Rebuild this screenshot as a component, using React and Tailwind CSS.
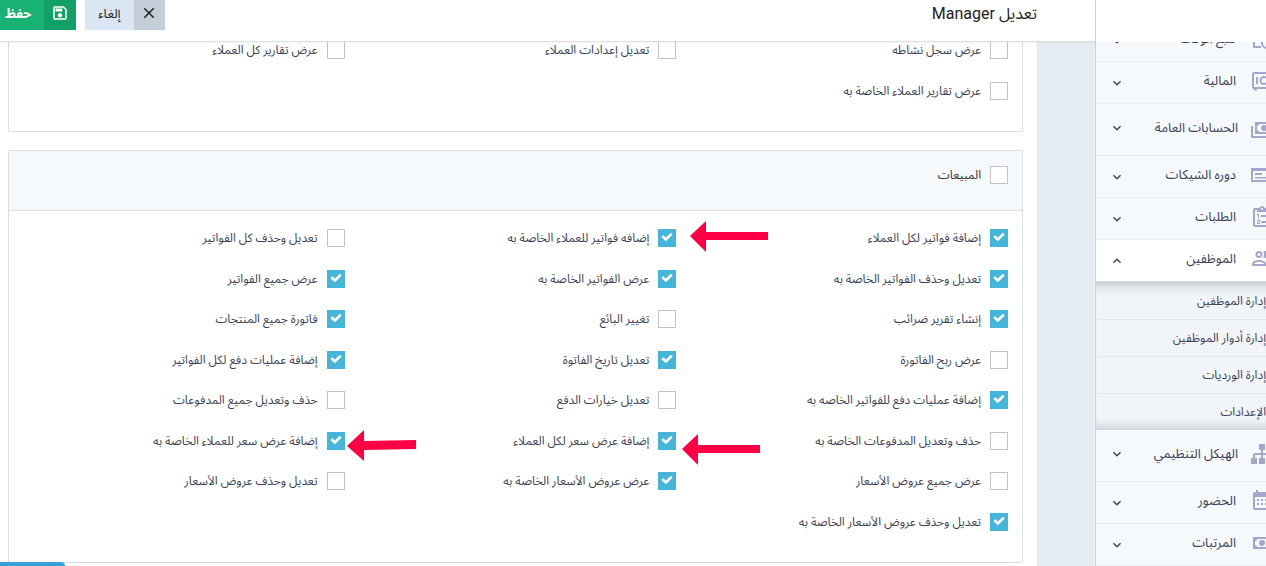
import React from 'react';
import { FaCheck } from 'react-icons/fa';

const icons = {
  time: 'M3 5h10v2H5v12h6v2H3V5m14 5a6 6 0 1 1 0 12 6 6 0 0 1 0-12m0 2a4 4 0 1 0 0 8 4 4 0 0 0 0-8m-1 1h2v3h3v2h-5v-5z',
  safe: 'M4 3h18a2 2 0 0 1 2 2v13a2 2 0 0 1-2 2v1h-3v-1H7v1.500H4V20a2 2 0 0 1-2-2V5a2 2 0 0 1 2-2m0 2v13h18V5H4m2 3h2v7H6V8m8-1a4.500 4.500 0 1 1 0 9 4.500 4.500 0 0 1 0-9m0 2a2.500 2.500 0 1 0 0 5 2.500 2.500 0 0 0 0-5z',
  cashMultiple: 'M5,6H23V18H5V6M14,9A3,3 0 0,1 17,12A3,3 0 0,1 14,15A3,3 0 0,1 11,12A3,3 0 0,1 14,9M9,8A2,2 0 0,1 7,10V14A2,2 0 0,1 9,16H19A2,2 0 0,1 21,14V10A2,2 0 0,1 19,8H9M1,10H3V20H19V22H1V10Z',
  check: 'M1 5h22v14H1V5m2 3v9h18V8H3m2 2h7v2H5v-2m0 4h14v1.500H5V14z',
  clipboard: 'M19 3h-4.200a3 3 0 0 0-5.600 0H5a2 2 0 0 0-2 2v15a2 2 0 0 0 2 2h14a2 2 0 0 0 2-2V5a2 2 0 0 0-2-2m-7 0a1 1 0 1 1 0 2 1 1 0 0 1 0-2M5 5h2v2h10V5h2v15H5V5m2 4v1h1v3h1V9H7m4 1v2h7v-2h-7m-4 4.500v1h2v1H7v2.500h3v-1H8v-.700h2v-2.800H7m4 1.500v2h7v-2h-7z',
  people: 'M13.070 10.410A5 5 0 0 0 13.070 4.590A3.390 3.390 0 0 1 15 4A3.500 3.500 0 0 1 15 11A3.390 3.390 0 0 1 13.070 10.410M5.500 7.500A3.500 3.500 0 1 1 9 11A3.500 3.500 0 0 1 5.500 7.500M7.500 7.500A1.500 1.500 0 1 0 9 6A1.500 1.500 0 0 0 7.500 7.500M16 17V19H2V17S2 13 9 13 16 17 16 17M14 17C13.860 16.220 12.670 15 9 15S4.070 16.310 4 17M15.950 13A5.320 5.320 0 0 1 18 17V19H22V17S22 13.370 15.940 13Z',
  sitemap: 'M9,2V8H11V11H5C3.890,11 3,11.890 3,13V16H1V22H7V16H5V13H11V16H9V22H15V16H13V13H19V16H17V22H23V16H21V13C21,11.890 20.110,11 19,11H13V8H15V2H9Z',
  calendar: 'M9,10V12H7V10H9M13,10V12H11V10H13M17,10V12H15V10H17M19,3A2,2 0 0,1 21,5V19A2,2 0 0,1 19,21H5C3.890,21 3,20.100 3,19V5A2,2 0 0,1 5,3H6V1H8V3H16V1H18V3H19M19,19V8H5V19H19M9,14V16H7V14H9M13,14V16H11V14H13M17,14V16H15V14H17Z',
  cash: 'M3,6H21V18H3V6M12,9A3,3 0 0,1 15,12A3,3 0 0,1 12,15A3,3 0 0,1 9,12A3,3 0 0,1 12,9M7,8A2,2 0 0,1 5,10V14A2,2 0 0,1 7,16H17A2,2 0 0,1 19,14V10A2,2 0 0,1 17,8H7Z',
  chevron: 'M7.410,8.580L12,13.170L16.590,8.580L18,10L12,16L6,10L7.410,8.580Z',
  save: 'M17 3H5C3.890 3 3 3.900 3 5V19C3 20.100 3.890 21 5 21H19C20.100 21 21 20.100 21 19V7L17 3M19 19H5V5H16.170L19 7.830V19M12 12C10.340 12 9 13.340 9 15S10.340 18 12 18 15 16.660 15 15 13.660 12 12 12M6 6H15V10H6V6Z',
  close: 'M19,6.410L17.590,5L12,10.590L6.410,5L5,6.410L10.590,12L5,17.590L6.410,19L12,13.410L17.590,19L19,17.590L13.410,12L19,6.410Z',
};

const menu = [
  { label: 'تتبع الوقت', icon: 'time' },
  { label: 'المالية', icon: 'safe' },
  { label: 'الحسابات العامة', icon: 'cashMultiple', tall: true },
  { label: 'دوره الشيكات', icon: 'check' },
  { label: 'الطلبات', icon: 'clipboard' },
  {
    label: 'الموظفين',
    icon: 'people',
    children: ['إدارة الموظفين', 'إدارة أدوار الموظفين', 'إدارة الورديات', 'الإعدادات'],
  },
  { label: 'الهيكل التنظيمي', icon: 'sitemap', tall: true },
  { label: 'الحضور', icon: 'calendar' },
  { label: 'المرتبات', icon: 'cash' },
];

const clientPermissions = [
  { label: 'عرض سجل نشاطه' },
  { label: 'تعديل إعدادات العملاء' },
  { label: 'عرض تقارير كل العملاء' },
  { label: 'عرض تقارير العملاء الخاصة به' },
];

const salesPermissions = [
  { label: 'إضافة فواتير لكل العملاء', checked: true },
  { label: 'إضافه فواتير للعملاء الخاصة به', checked: true, arrow: 'left-8 -top-2' },
  { label: 'تعديل وحذف كل الفواتير' },
  { label: 'تعديل وحذف الفواتير الخاصة به', checked: true },
  { label: 'عرض الفواتير الخاصة به', checked: true },
  { label: 'عرض جميع الفواتير', checked: true },
  { label: 'إنشاء تقرير ضرائب', checked: true },
  { label: 'تغيير البائع' },
  { label: 'فاتورة جميع المنتجات', checked: true },
  { label: 'عرض ربح الفاتورة' },
  { label: 'تعديل تاريخ الفاتوة', checked: true },
  { label: 'إضافة عمليات دفع لكل الفواتير', checked: true },
  { label: 'إضافة عمليات دفع للفواتير الخاصه به', checked: true },
  { label: 'تعديل خيارات الدفع' },
  { label: 'حذف وتعديل جميع المدفوعات' },
  { label: 'حذف وتعديل المدفوعات الخاصة به' },
  { label: 'إضافة عرض سعر لكل العملاء', checked: true, arrow: 'left-6 top-0.5' },
  { label: 'إضافة عرض سعر للعملاء الخاصة به', checked: true, arrow: 'left-5 -top-0.5', short: true },
  { label: 'عرض جميع عروض الأسعار' },
  { label: 'عرض عروض الأسعار الخاصة به', checked: true },
  { label: 'تعديل وحذف عروض الأسعار' },
  { label: 'تعديل وحذف عروض الأسعار الخاصة به', checked: true },
];

const Icon = ({ name, className }) => (
  <svg viewBox="0 0 24 24" fill="currentColor" fillRule="evenodd" aria-hidden="true" className={className}>
    <path d={icons[name]} />
  </svg>
);

const Arrow = ({ short, className }) => (
  <svg
    width={short ? 69 : 78}
    height="31"
    aria-hidden="true"
    className={`absolute z-10 max-w-none text-[#ff0044] ${className}`}
  >
    <path
      d={short ? 'M0 16L17 0V11L69 10V19L17 20V31Z' : 'M0 15L16 0V11H78V19H16V31Z'}
      fill="currentColor"
    />
  </svg>
);

const Permission = ({ label, checked, arrow, short }) => (
  <label className="flex items-center gap-[9px] px-[5px]">
    <span className="relative shrink-0 size-[18px]">
      <input
        type="checkbox"
        defaultChecked={checked}
        className="peer block appearance-none size-[18px] border border-[#c3c3c7] bg-white checked:border-[#45b5d9] checked:bg-[#45b5d9]"
      />
      <FaCheck
        size={10}
        stroke="currentColor"
        strokeWidth={50}
        className="absolute left-1 top-[3px] hidden overflow-visible text-white pointer-events-none peer-checked:block"
      />
      {arrow && <Arrow short={short} className={arrow} />}
    </span>
    <span className="whitespace-nowrap">{label}</span>
  </label>
);

const Panel = ({ title, items, rows, className = '' }) => (
  <section className={`shrink-0 border border-[#dcdfe2] rounded-xs ${className}`}>
    {title && (
      <div className="h-[60px] pt-3.5 px-[9px] bg-[#f5f9fc] border-b border-[#dcdfe2] text-[#333]">
        <Permission label={title} />
      </div>
    )}
    <div className={`grid grid-cols-3 px-[9px] pt-[7px] pb-5 ${rows}`}>
      {items.map((item) => (
        <Permission key={item.label} {...item} />
      ))}
    </div>
  </section>
);

const MenuItem = ({ label, icon, tall, children }) => (
  <li>
    <button
      type="button"
      className={`flex items-center w-full pl-[13px] border-b text-[13px] ${tall ? 'h-[52px]' : 'h-[42px]'} ${
        children ? 'bg-white border-[#d3d6da]' : 'border-[#eaeef1]'
      }`}
    >
      <span className={`flex items-center pb-1 ${tall ? 'gap-3' : 'gap-3.5'}`}>
        <Icon name={icon} className="size-6 shrink-0 text-[#a4a6cc]" />
        {label}
      </span>
      <Icon name="chevron" className={`size-4 mr-auto ${children ? 'rotate-180' : ''} ${tall ? 'mb-1' : ''}`} />
    </button>
    {children && (
      <ul className="pt-px bg-[#f1f5fa] shadow-[inset_0_12px_12px_-10px_rgba(0,0,0,0.25),inset_0_-12px_12px_-10px_rgba(0,0,0,0.2)]">
        {children.map((child) => (
          <li key={child} className="border-b border-[#e2e6ea] last:border-b-0">
            <a href="#" className="flex items-center h-9 pr-2">{child}</a>
          </li>
        ))}
      </ul>
    )}
  </li>
);

export default function App() {
  return (
    <div
      dir="rtl"
      className="relative flex h-screen overflow-hidden bg-[#e4ebf3] text-[#3c3f57] text-[12px] leading-5 font-[Roboto,'Noto_Sans_Arabic',sans-serif]"
    >
      <aside className="shrink-0 w-[171px] flex flex-col overflow-hidden border-l border-[#cfd3d6] bg-[#f5f9fc]">
        <div className="relative z-10 shrink-0 h-[42px] bg-white" />
        <ul className="-mt-[22px] -mr-2">
          {menu.map((item) => (
            <MenuItem key={item.label} {...item} />
          ))}
        </ul>
      </aside>

      <div className="flex-1 min-w-0 flex flex-col">
        <header className="relative z-20 shrink-0 flex items-start h-[42px] pr-[58px] bg-white border-b border-[#dddfe1] shadow-xs">
          <h1 className="ml-auto pt-1 text-base leading-5 text-[#222]">تعديل Manager</h1>
          <button type="button" className="flex h-[30px] ml-[9px] bg-[#dae6f3] text-[13px] text-[#222]">
            <span className="flex items-center justify-center w-[31px] h-full pb-1 bg-[#c4ced9]">
              <Icon name="close" className="size-[18px]" />
            </span>
            <span className="px-[13px] py-1">إلغاء</span>
          </button>
          <button type="button" className="flex h-[30px] -ml-2 bg-[#18b374] text-[13px] font-bold text-white">
            <span className="flex items-center justify-center w-8 h-full pb-1 bg-[#12a066]">
              <Icon name="save" className="size-[18px]" />
            </span>
            <span className="px-[13px] py-1">حفظ</span>
          </button>
        </header>

        <main className="flex-1 min-h-0 flex flex-col gap-[18px] overflow-hidden mr-[58px] pr-3.5 pl-2 bg-white">
          <Panel items={clientPermissions} rows="h-[108px] grid-rows-2" className="-mt-5" />
          <Panel title="المبيعات" items={salesPermissions} rows="h-[351px] grid-rows-8" />
        </main>
      </div>

      <div className="absolute left-0 bottom-0 w-[65px] h-1 rounded-tr bg-[#36a0da]" />
    </div>
  );
}
